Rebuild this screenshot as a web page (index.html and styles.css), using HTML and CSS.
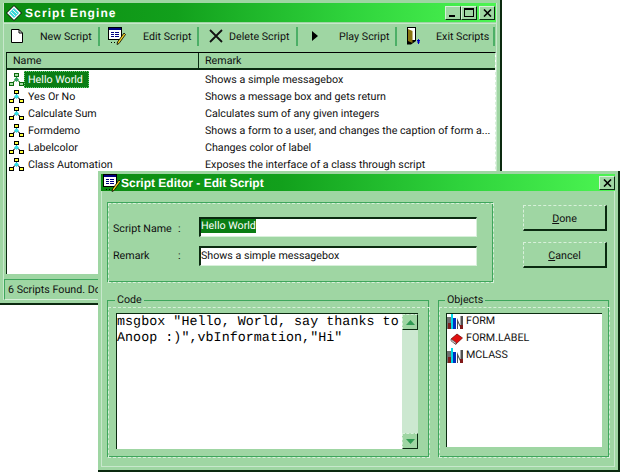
FILE: index.html
```html
<!DOCTYPE html>
<html lang="en">
<head>
<meta charset="utf-8">
<title>Script Engine</title>
<link rel="stylesheet" href="styles.css">
</head>
<body>
<svg class="defs" width="0" height="0">
  <defs>
    <symbol id="net" viewBox="0 0 15 15">
      <path d="M7.500 4V8M3 11L7.500 7.500L12 11" fill="none" stroke="#000"/>
      <rect x="5.500" y="1.500" width="4" height="3" fill="#ffff40" stroke="#000"/>
      <rect x="0.500" y="10.500" width="4" height="3" fill="#ffff40" stroke="#000"/>
      <rect x="10.500" y="10.500" width="4" height="3" fill="#ffff40" stroke="#000"/>
      <path d="M7.500 5L10 7.500L7.500 10L5 7.500Z" fill="#30e0e8"/>
    </symbol>
    <symbol id="net-sel" viewBox="0 0 15 15">
      <path d="M7.500 4V8M3 11L7.500 7.500L12 11" fill="none" stroke="#0a6a0a"/>
      <rect x="5.500" y="1.500" width="4" height="3" fill="#a8dca8" stroke="#0a6a0a"/>
      <rect x="0.500" y="10.500" width="4" height="3" fill="#a8dca8" stroke="#0a6a0a"/>
      <rect x="10.500" y="10.500" width="4" height="3" fill="#a8dca8" stroke="#0a6a0a"/>
      <path d="M7.500 5L10 7.500L7.500 10L5 7.500Z" fill="#30a860"/>
    </symbol>
    <symbol id="edit" viewBox="0 0 18 18">
      <rect x="0.500" y="0.500" width="13" height="12" fill="#fff" stroke="#000"/>
      <rect x="1" y="1" width="12" height="2" fill="#000080"/>
      <path d="M3 5.500H6M7 5.500H11M3 7.500H6M7 7.500H11M3 9.500H6M7 9.500H11" stroke="#000080"/>
      <path d="M3 15.500H4M6 15.500H7M9 15.500H10" stroke="#000"/>
      <path d="M16 6L17.500 7.500L11 16.500L9 17.500L9.500 15Z" fill="#f0d020" stroke="#000" stroke-width="0.800"/>
    </symbol>
    <symbol id="books" viewBox="0 0 16 16">
      <rect x="0" y="3" width="4" height="12" fill="#707070"/>
      <rect x="1" y="9" width="3" height="6" fill="#802020"/>
      <rect x="4" y="0" width="2" height="15" fill="#00d8e8"/>
      <rect x="6" y="4" width="3" height="11" fill="#0030c0"/>
      <path d="M10 15V4L13.500 12V2H16V15H14L11 9V15Z" fill="#505050"/>
      <rect x="13" y="11" width="3" height="4" fill="#801818"/>
    </symbol>
  </defs>
</svg>

<section class="window main-window">
  <header class="titlebar">
    <svg class="title-icon" viewBox="0 0 16 16" width="16" height="16" aria-hidden="true">
      <path d="M8 0.500L15.500 8L8 15.500L0.500 8Z" fill="#fff" stroke="#000"/>
      <path d="M8 3L13 8L8 13L3 8Z" fill="#38d8d8"/>
      <path d="M5 7L9 11M7 5L11 9" stroke="#f0f0f0"/>
    </svg>
    <span class="title-text title-main">Script Engine</span>
    <div class="caption-buttons">
      <button class="cap-btn"><span class="glyph-min"></span></button>
      <button class="cap-btn"><span class="glyph-max"></span></button>
      <button class="cap-btn cap-close">
        <svg viewBox="0 0 9 8" width="9" height="8"><path d="M1 0.500L8 7.500M8 0.500L1 7.500" stroke="#000" stroke-width="1.600"/></svg>
      </button>
    </div>
  </header>

  <nav class="toolbar">
    <div class="tool tool-new">
      <svg viewBox="0 0 12 14" width="12" height="14"><path d="M0.500 0.500H8L11.500 4V13.500H0.500Z" fill="#fff" stroke="#000"/><path d="M8 0.500V4H11.500" fill="none" stroke="#000"/></svg>
      <span>New Script</span>
    </div>
    <div class="tool tool-edit">
      <svg width="18" height="18"><use href="#edit"/></svg>
      <span>Edit Script</span>
    </div>
    <div class="tool tool-delete">
      <svg viewBox="0 0 14 14" width="14" height="14"><path d="M1 1L13 13M13 1L1 13" stroke="#101010" stroke-width="1.800"/></svg>
      <span>Delete Script</span>
    </div>
    <div class="tool tool-play">
      <svg viewBox="0 0 6 10" width="6" height="10"><path d="M0 0L6 5L0 10Z" fill="#000"/></svg>
      <span>Play Script</span>
    </div>
    <div class="tool tool-exit">
      <svg viewBox="0 0 15 18" width="15" height="18">
        <path d="M1 0H10V14L5 17.500H1Z" fill="#000"/>
        <path d="M2 1H9V13H2Z" fill="#fff"/>
        <path d="M2 2L6.500 4V16L2 14Z" fill="#8a7410"/>
        <path d="M11 15H14M12.500 12.500V17M11 14L12.500 12.500L14 14" fill="none" stroke="#0000c0"/>
      </svg>
      <span>Exit Scripts</span>
    </div>
  </nav>

  <div class="listview">
    <div class="list-head">
      <div class="col-name">Name</div>
      <div class="col-remark">Remark</div>
    </div>
    <ul class="rows">
      <li class="row"><div class="cell-name"><svg width="15" height="15"><use href="#net-sel"/></svg><span class="selected">Hello World</span></div><div class="cell-remark">Shows a simple messagebox</div></li>
      <li class="row"><div class="cell-name"><svg width="15" height="15"><use href="#net"/></svg><span>Yes Or No</span></div><div class="cell-remark">Shows a message box and gets return</div></li>
      <li class="row"><div class="cell-name"><svg width="15" height="15"><use href="#net"/></svg><span>Calculate Sum</span></div><div class="cell-remark">Calculates sum of any given integers</div></li>
      <li class="row"><div class="cell-name"><svg width="15" height="15"><use href="#net"/></svg><span>Formdemo</span></div><div class="cell-remark">Shows a form to a user, and changes the caption of form a...</div></li>
      <li class="row"><div class="cell-name"><svg width="15" height="15"><use href="#net"/></svg><span>Labelcolor</span></div><div class="cell-remark">Changes color of label</div></li>
      <li class="row"><div class="cell-name"><svg width="15" height="15"><use href="#net"/></svg><span>Class Automation</span></div><div class="cell-remark">Exposes the interface of a class through script</div></li>
    </ul>
  </div>
  <footer class="statusbar">6 Scripts Found. Do</footer>
</section>

<section class="window editor-window">
  <header class="titlebar editor-title">
    <svg class="title-icon" width="18" height="18"><use href="#edit"/></svg>
    <span class="title-text">Script Editor - Edit Script</span>
    <div class="caption-buttons">
      <button class="cap-btn cap-close">
        <svg viewBox="0 0 9 8" width="9" height="8"><path d="M1 0.500L8 7.500M8 0.500L1 7.500" stroke="#000" stroke-width="1.600"/></svg>
      </button>
    </div>
  </header>

  <div class="editor-body">
    <div class="editor-top">
      <div class="frame info-frame">
        <div class="field field-first">
          <label class="field-label">Script Name</label><span class="colon">:</span>
          <div class="input"><span class="input-sel">Hello World</span></div>
        </div>
        <div class="field">
          <label class="field-label field-label-up">Remark</label><span class="colon colon-up">:</span>
          <div class="input input-second">Shows a simple messagebox</div>
        </div>
      </div>
      <div class="actions">
        <button class="btn"><u>D</u>one</button>
        <button class="btn"><u>C</u>ancel</button>
      </div>
    </div>

    <div class="editor-bottom">
      <fieldset class="group code-group">
        <legend>Code</legend>
        <div class="code-box">
          <pre class="code">msgbox "Hello, World, say thanks to
Anoop :)",vbInformation,"Hi"</pre>
          <div class="scrollbar">
            <button class="sb-btn"><svg viewBox="0 0 9 5" width="9" height="5"><path d="M0 5L4.500 0L9 5Z" fill="#2f9a52"/></svg></button>
            <div class="sb-track"></div>
            <button class="sb-btn"><svg viewBox="0 0 9 5" width="9" height="5"><path d="M0 0L4.500 5L9 0Z" fill="#2f9a52"/></svg></button>
          </div>
        </div>
      </fieldset>
      <fieldset class="group objects-group">
        <legend>Objects</legend>
        <ul class="objects">
          <li class="obj"><svg width="16" height="16"><use href="#books"/></svg><span>FORM</span></li>
          <li class="obj">
            <svg viewBox="0 0 16 16" width="16" height="16"><path d="M4 8L10 3L15.500 7L9 13H8Z" fill="#e01010" stroke="#600" stroke-width="0.700"/><path d="M4 8L9 11.500V13.500L4 10Z" fill="#d0d0d0" stroke="#444" stroke-width="0.600"/></svg>
            <span>FORM.LABEL</span>
          </li>
          <li class="obj"><svg width="16" height="16"><use href="#books"/></svg><span>MCLASS</span></li>
        </ul>
      </fieldset>
    </div>
  </div>
</section>
</body>
</html>
```

FILE: styles.css
```css
* { box-sizing: border-box; }
html, body { margin: 0; padding: 0; }
body {
  position: relative;
  width: 623px;
  height: 473px;
  overflow: hidden;
  background: #fff;
  font-family: Roboto, "Liberation Sans", Arial, sans-serif;
  font-size: 10.7px;
  text-rendering: geometricPrecision;
  color: #101010;
}
.defs { position: absolute; }

.window {
  position: absolute;
  display: flex;
  flex-direction: column;
  background: #9fd6a3;
  border: 3px solid #9fd6a3;
  box-shadow: inset 0 0 0 1px #c8e8cc, 1px 1px 0 1px #0c2a10;
}
.main-window { left: 0; top: 0; width: 500px; height: 303px; padding: 0 1px; }
.editor-window { left: 98px; top: 171px; width: 520px; height: 299px; }

.titlebar {
  display: flex;
  align-items: center;
  flex: none;
  height: 19px;
  padding: 0 1px 0 2px;
  background: linear-gradient(90deg, #0b8a10 0%, #12a01c 35%, #2fd33c 70%, #4cf552 100%);
  color: #fff;
}
.editor-title { height: 17px; padding-right: 0; }
.title-icon { flex: none; margin-right: 3px; }
.editor-title .title-icon { margin-right: 0; }
.title-text {
  font-family: "Liberation Sans", Arial, sans-serif;
  font-weight: bold;
  font-size: 12px;
  white-space: nowrap;
}
.title-main { letter-spacing: 1.1px; }
.caption-buttons { display: flex; margin-left: auto; }
.cap-btn {
  display: flex;
  align-items: center;
  justify-content: center;
  width: 16px;
  height: 14px;
  padding: 0;
  background: #9fd6a3;
  border: 1px solid;
  border-color: #d8f0da #0a2a10 #0a2a10 #d8f0da;
}
.cap-close { margin-left: 2px; }
.glyph-min { width: 6px; height: 2px; background: #000; margin-top: 7px; margin-right: 2px; }
.glyph-max { width: 10px; height: 9px; border: 1px solid #000; border-top-width: 2px; }

.toolbar {
  display: flex;
  flex: none;
  align-items: center;
  height: 25px;
  margin-top: 1px;
  border-top: 1px solid #c8e8cc;
}
.tool {
  display: flex;
  flex: none;
  align-items: center;
  height: 19px;
  border-right: 2px solid #4caf66;
  white-space: nowrap;
}
.tool svg { flex: none; }
.tool-new { width: 96px; padding-left: 7px; }
.tool-new span { margin-left: 17px; }
.tool-edit { width: 99px; padding-left: 8px; }
.tool-edit span { margin-left: 17px; }
.tool-delete { width: 99px; padding-left: 10px; }
.tool-delete span { margin-left: 6px; }
.tool-play { width: 99px; padding-left: 14px; }
.tool-play span { margin-left: 21px; }
.tool-exit { width: 98px; padding-left: 9px; }
.tool-exit span { margin-left: 15px; }

.listview {
  flex: 1;
  min-height: 0;
  margin: 4px 0 0 2px;
  display: flex;
  flex-direction: column;
  background: #fff;
  border-top: 1px solid #000;
  border-left: 1px solid #0a2a10;
  border-right: 1px dashed #d8f0da;
}
.list-head {
  display: flex;
  flex: none;
  height: 17px;
  background: #9fd6a3;
  border-bottom: 2px solid #0a2a10;
  line-height: 16px;
}
.col-name { width: 192px; padding-left: 6px; border-right: 1px solid #0a2a10; }
.col-remark { padding-left: 6px; }
.rows { list-style: none; margin: 0; padding: 1px 0 0; }
.row { display: flex; height: 17px; align-items: center; }
.cell-name { flex: none; width: 193px; display: flex; align-items: center; padding-left: 2px; white-space: nowrap; }
.cell-name svg { flex: none; }
.cell-name span { padding: 0 6px 0 4px; line-height: 17px; }
.cell-name .selected { background: #0a7d14; color: #fff; outline: 1px dotted #6ad07a; outline-offset: -1px; }
.cell-remark { padding-left: 5px; white-space: nowrap; }

.statusbar {
  flex: none;
  height: 21px;
  margin-top: 5px;
  padding-left: 3px;
  line-height: 19px;
  border: 1px solid;
  border-color: #3ea65c #d8f0da #d8f0da #3ea65c;
  white-space: nowrap;
  overflow: hidden;
}

.editor-body { flex: 1; display: flex; flex-direction: column; padding: 11px 0 0 6px; }
.editor-top { display: flex; flex: none; }
.frame, .group { position: relative; border: 1px solid #3ea65c; }
.frame::after, .group::after {
  content: "";
  position: absolute;
  inset: 0 -2px -2px 0;
  border: 1px dashed #d8f0da;
  pointer-events: none;
}
.info-frame { width: 386px; height: 80px; padding: 14px 14px 0 5px; }
.field { display: flex; align-items: center; height: 20px; margin-bottom: 9px; }
.field-label { width: 65px; }
.field-label-up, .colon-up { margin-top: -2px; }
.field-first .field-label, .field-first .colon { margin-top: 3px; }
.colon { width: 21px; }
.input {
  width: 278px;
  height: 20px;
  padding: 0;
  background: #fff;
  color: #101010;
  border: 1px solid;
  border-color: #0a2a10 #d8f0da #d8f0da #0a2a10;
  border-top-width: 2px;
  border-left-width: 2px;
  white-space: nowrap;
  line-height: 14px;
}
.input-second { padding-top: 1px; }
.input-sel { background: #0a7d14; color: #fff; display: inline-block; }
.actions { display: flex; flex-direction: column; gap: 11px; margin: 3px 0 0 30px; }
.btn {
  width: 84px;
  height: 26px;
  padding: 2px 0 0;
  background: #9fd6a3;
  border: 1px dashed #d8f0da;
  border-right: 2px solid #0a2a10;
  border-bottom: 2px solid #0a2a10;
  font: 10.7px Roboto, "Liberation Sans", Arial, sans-serif;
  text-rendering: geometricPrecision;
  color: #101010;
}

.editor-bottom { display: flex; flex: none; margin-top: 11px; gap: 9px; }
.group { margin: 0; padding: 0; min-width: 0; height: 164px; }
.group legend {
  margin-left: -1px;
  padding: 0 2px;
  line-height: 14px;
}
.code-group { width: 322px; padding: 6px 10px 0 8px; }
.objects-group { width: 171px; padding: 6px 6px 0 7px; }
.code-box {
  display: flex;
  height: 136px;
  background: #fff;
  border-top: 1px solid #0a2a10;
  border-left: 1px solid #0a2a10;
}
.code {
  flex: 1;
  margin: 0;
  padding: 1px 0 0 0;
  font-family: "Liberation Mono", "Courier New", monospace;
  font-size: 13.33px;
  line-height: 16px;
  letter-spacing: 0.05px;
  color: #000;
  overflow: hidden;
}
.scrollbar { flex: none; width: 16px; display: flex; flex-direction: column; background: #cce8d0; }
.sb-btn {
  flex: none;
  width: 16px;
  height: 16px;
  padding: 0;
  display: flex;
  align-items: center;
  justify-content: center;
  background: #9fd6a3;
  border: 1px dashed #d8f0da;
  border-right: 1px solid #0a2a10;
  border-bottom: 1px solid #0a2a10;
}
.sb-track { flex: 1; }
.objects {
  list-style: none;
  margin: 0;
  padding: 0;
  height: 134px;
  background: #fff;
  border-top: 1px solid #0a2a10;
  border-left: 1px solid #0a2a10;
}
.obj { display: flex; align-items: center; height: 17px; gap: 3px; white-space: nowrap; }
.obj:first-child { margin-top: -1px; }
.obj span { margin-top: -2px; }
```
